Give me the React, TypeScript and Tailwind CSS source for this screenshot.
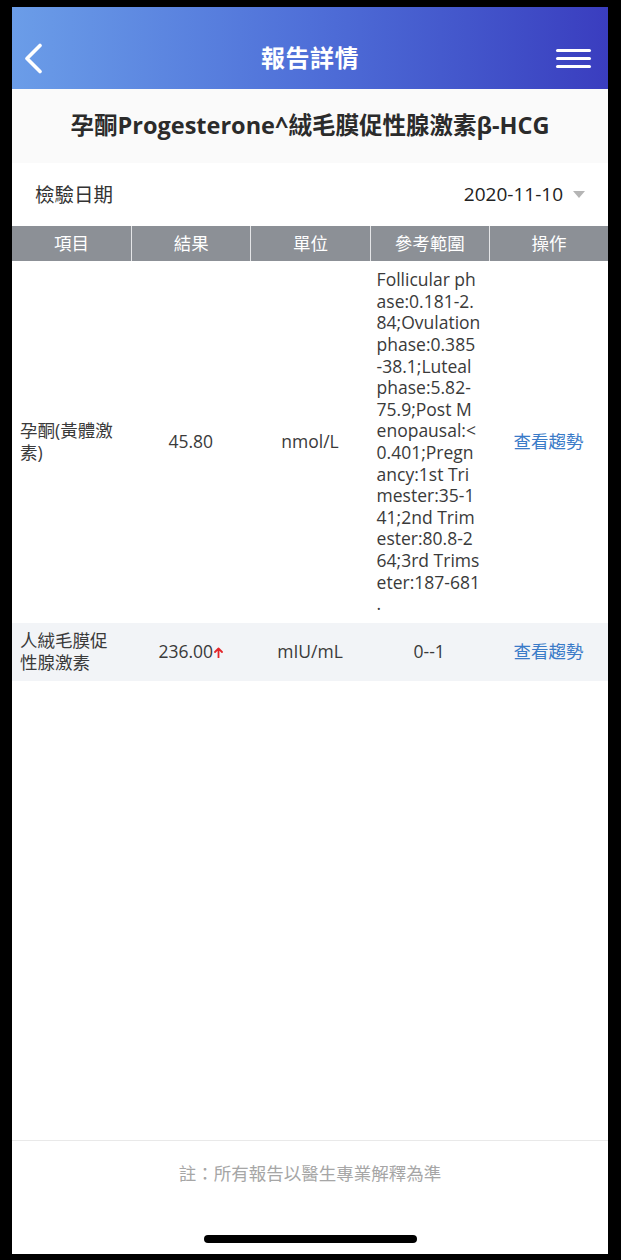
const font = "font-['Open_Sans','Noto_Sans_CJK_TC',sans-serif]";

const rangeLines = [
  "Follicular ph",
  "ase:0.181-2.",
  "84;Ovulation",
  "phase:0.385",
  "-38.1;Luteal",
  "phase:5.82-",
  "75.9;Post M",
  "enopausal:<",
  "0.401;Pregn",
  "ancy:1st Tri",
  "mester:35-1",
  "41;2nd Trim",
  "ester:80.8-2",
  "64;3rd Trims",
  "eter:187-681",
  ".",
];

function BackIcon() {
  return (
    <svg width="19" height="31" viewBox="0 0 19 31" fill="none">
      <polyline
        points="16,2.5 3,15.5 16,28.5"
        stroke="white"
        strokeWidth="3.6"
        strokeLinecap="round"
        strokeLinejoin="round"
      />
    </svg>
  );
}

function UpArrow() {
  return (
    <svg width="9" height="11" viewBox="0 0 9 11" fill="none" className="ml-[1px]">
      <path d="M4.5 10.5V1.5M1 5L4.5 1.5L8 5" stroke="#e3262a" strokeWidth="1.8" strokeLinecap="round" strokeLinejoin="round" />
    </svg>
  );
}

export default function App() {
  return (
    <div className={`h-[1260px] w-[621px] bg-black pb-[6px] pl-[12px] pr-[13px] pt-[7px] ${font}`}>
      <div className="flex h-full flex-col bg-white">
        {/* Nav bar */}
        <header className="h-[82px] bg-gradient-to-r from-[#6b9de8] via-[#4f6fd8] to-[#3a3dbf] pt-[20px]">
          <div className="grid h-[62px] grid-cols-[1fr_auto_1fr] items-center">
            <div className="pl-[12px]">
              <BackIcon />
            </div>
            <h1 className="text-[24px] font-semibold tracking-[0.5px] text-white">報告詳情</h1>
            <div className="flex justify-end pr-[17px]">
              <div className="flex flex-col gap-[5px]">
                <span className="block h-[3px] w-[35px] rounded-full bg-white" />
                <span className="block h-[3px] w-[35px] rounded-full bg-white" />
                <span className="block h-[3px] w-[35px] rounded-full bg-white" />
              </div>
            </div>
          </div>
        </header>

        {/* Report title */}
        <div className="flex h-[74px] items-center justify-center bg-[#fafafa]">
          <h2 className="text-[23.5px] font-bold text-[#2b2b2b]">孕酮Progesterone^絨毛膜促性腺激素β-HCG</h2>
        </div>

        {/* Date row */}
        <div className="flex h-[63px] items-center justify-between px-[23px]">
          <span className="text-[19.5px] text-[#333]">檢驗日期</span>
          <div className="flex items-center gap-[10px]">
            <span className="text-[19px] text-[#222]">2020-11-10</span>
            <span className="h-0 w-0 border-x-[6px] border-t-[7px] border-x-transparent border-t-[#b5b5b5]" />
          </div>
        </div>

        {/* Table */}
        <div className="text-[17.5px] leading-[21.6px] text-[#3a3a3a]">
          <div className="grid h-[35px] grid-cols-5 bg-[#8c9096] text-white">
            <div className="flex items-center justify-center">項目</div>
            <div className="flex items-center justify-center border-l border-[#e4e5e7]">結果</div>
            <div className="flex items-center justify-center border-l border-[#e4e5e7]">單位</div>
            <div className="flex items-center justify-center border-l border-[#e4e5e7]">參考範圍</div>
            <div className="flex items-center justify-center border-l border-[#e4e5e7]">操作</div>
          </div>

          <div className="grid h-[362px] grid-cols-5 items-center">
            <div className="pl-[8px]">
              孕酮(黃體激
              <br />
              素)
            </div>
            <div className="text-center">45.80</div>
            <div className="text-center">nmol/L</div>
            <div className="pl-[7px]">
              {rangeLines.map((l, i) => (
                <span key={i} className="block whitespace-pre">
                  {l}
                </span>
              ))}
            </div>
            <div className="text-center text-[#3a7bc8]">查看趨勢</div>
          </div>

          <div className="grid h-[58px] grid-cols-5 items-center bg-[#f2f4f7]">
            <div className="pl-[8px]">
              人絨毛膜促
              <br />
              性腺激素
            </div>
            <div className="flex items-center justify-center">
              236.00
              <UpArrow />
            </div>
            <div className="text-center">mIU/mL</div>
            <div className="text-center">0--1</div>
            <div className="text-center text-[#3a7bc8]">查看趨勢</div>
          </div>
        </div>

        <div className="flex-1" />

        {/* Footer */}
        <footer className="flex h-[114px] flex-col items-center border-t border-[#e9e9e9] pt-[20px]">
          <p className="text-[17.5px] leading-[24px] text-[#a6a6a6]">註：所有報告以醫生專業解釋為準</p>
          <div className="mt-[50px] h-[8px] w-[213px] rounded-full bg-black" />
        </footer>
      </div>
    </div>
  );
}
